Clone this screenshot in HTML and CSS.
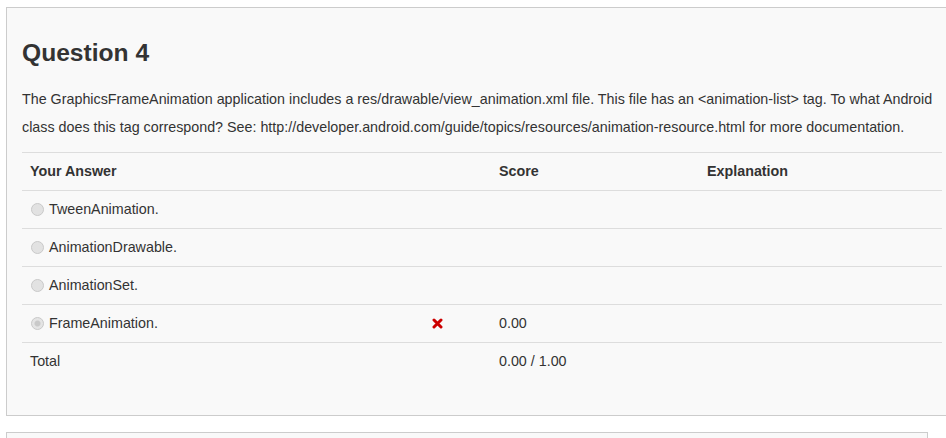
FILE: index.html
```html
<!DOCTYPE html>
<html>
<head>
<meta charset="utf-8">
<title>Question 4</title>
<link rel="stylesheet" href="styles.css">
</head>
<body>
<div class="page">
  <div class="panel">
    <h3 class="q-title">Question 4</h3>
    <p class="q-text">The GraphicsFrameAnimation application includes a res/drawable/view_animation.xml file. This file has an &lt;animation-list&gt; tag. To what Android class does this tag correspond? See: http://developer.android.com/guide/topics/resources/animation-resource.html for more documentation.</p>
    <table class="q-table">
      <colgroup>
        <col class="c-answer">
        <col class="c-mark">
        <col class="c-score">
        <col class="c-expl">
      </colgroup>
      <thead>
        <tr><th>Your Answer</th><th></th><th>Score</th><th>Explanation</th></tr>
      </thead>
      <tbody>
        <tr><td><span class="radio"></span>TweenAnimation.</td><td></td><td></td><td></td></tr>
        <tr><td><span class="radio"></span>AnimationDrawable.</td><td></td><td></td><td></td></tr>
        <tr><td><span class="radio"></span>AnimationSet.</td><td></td><td></td><td></td></tr>
        <tr><td><span class="radio checked"></span>FrameAnimation.</td><td class="mark"><svg class="x-icon" width="11" height="11" viewBox="0 0 11 11"><path d="M2 2 L9 9 M9 2 L2 9" stroke="#c00" stroke-width="3" stroke-linecap="round"/></svg></td><td>0.00</td><td></td></tr>
        <tr class="total"><td>Total</td><td></td><td>0.00 / 1.00</td><td></td></tr>
      </tbody>
    </table>
  </div>
  <div class="panel next"></div>
</div>
</body>
</html>
```

FILE: styles.css
```css
html, body {
  margin: 0;
  padding: 0;
  background: #fff;
  overflow: hidden;
}
body {
  font-family: "Liberation Sans", Arial, sans-serif;
  font-size: 14.3px;
  color: #333;
}
.page {
  padding: 7px 0 0 6px;
}
.panel {
  width: 920px;
  border: 1px solid #cccccc;
  background: #f9f9f9;
  padding: 30px 15px 15px 15px;
  margin-bottom: 16px;
}
.panel.next {
  height: 100px;
  padding: 0;
}
.q-title {
  margin: 1px 0 19px 0;
  font-size: 24.6px;
  line-height: 1.1;
  font-weight: bold;
  color: #333;
}
.q-text {
  margin: 0 0 11px 0;
  line-height: 28px;
}
.q-table {
  width: 920px;
  border-collapse: collapse;
  margin-bottom: 20px;
  table-layout: fixed;
}
.c-answer { width: 402px; }
.c-mark { width: 67px; }
.c-score { width: 208px; }
.c-expl { width: 243px; }
.q-table th,
.q-table td {
  border-top: 1px solid #dddddd;
  padding: 8px;
  line-height: 21px;
  text-align: left;
  vertical-align: top;
}
.q-table th {
  font-weight: bold;
}
.radio {
  display: inline-block;
  width: 11px;
  height: 11px;
  border: 1px solid #c9c9c9;
  border-radius: 50%;
  background: #e2e2e2;
  vertical-align: -2px;
  margin-right: 5px;
  margin-left: 1px;
  box-sizing: content-box;
}
.radio.checked {
  background: radial-gradient(circle, #c9c9c9 0, #c9c9c9 2.5px, #e4e4e4 3.5px);
}
.mark {
  padding-left: 8px;
}
.x-icon {
  display: block;
  margin-top: 5px;
}
```
